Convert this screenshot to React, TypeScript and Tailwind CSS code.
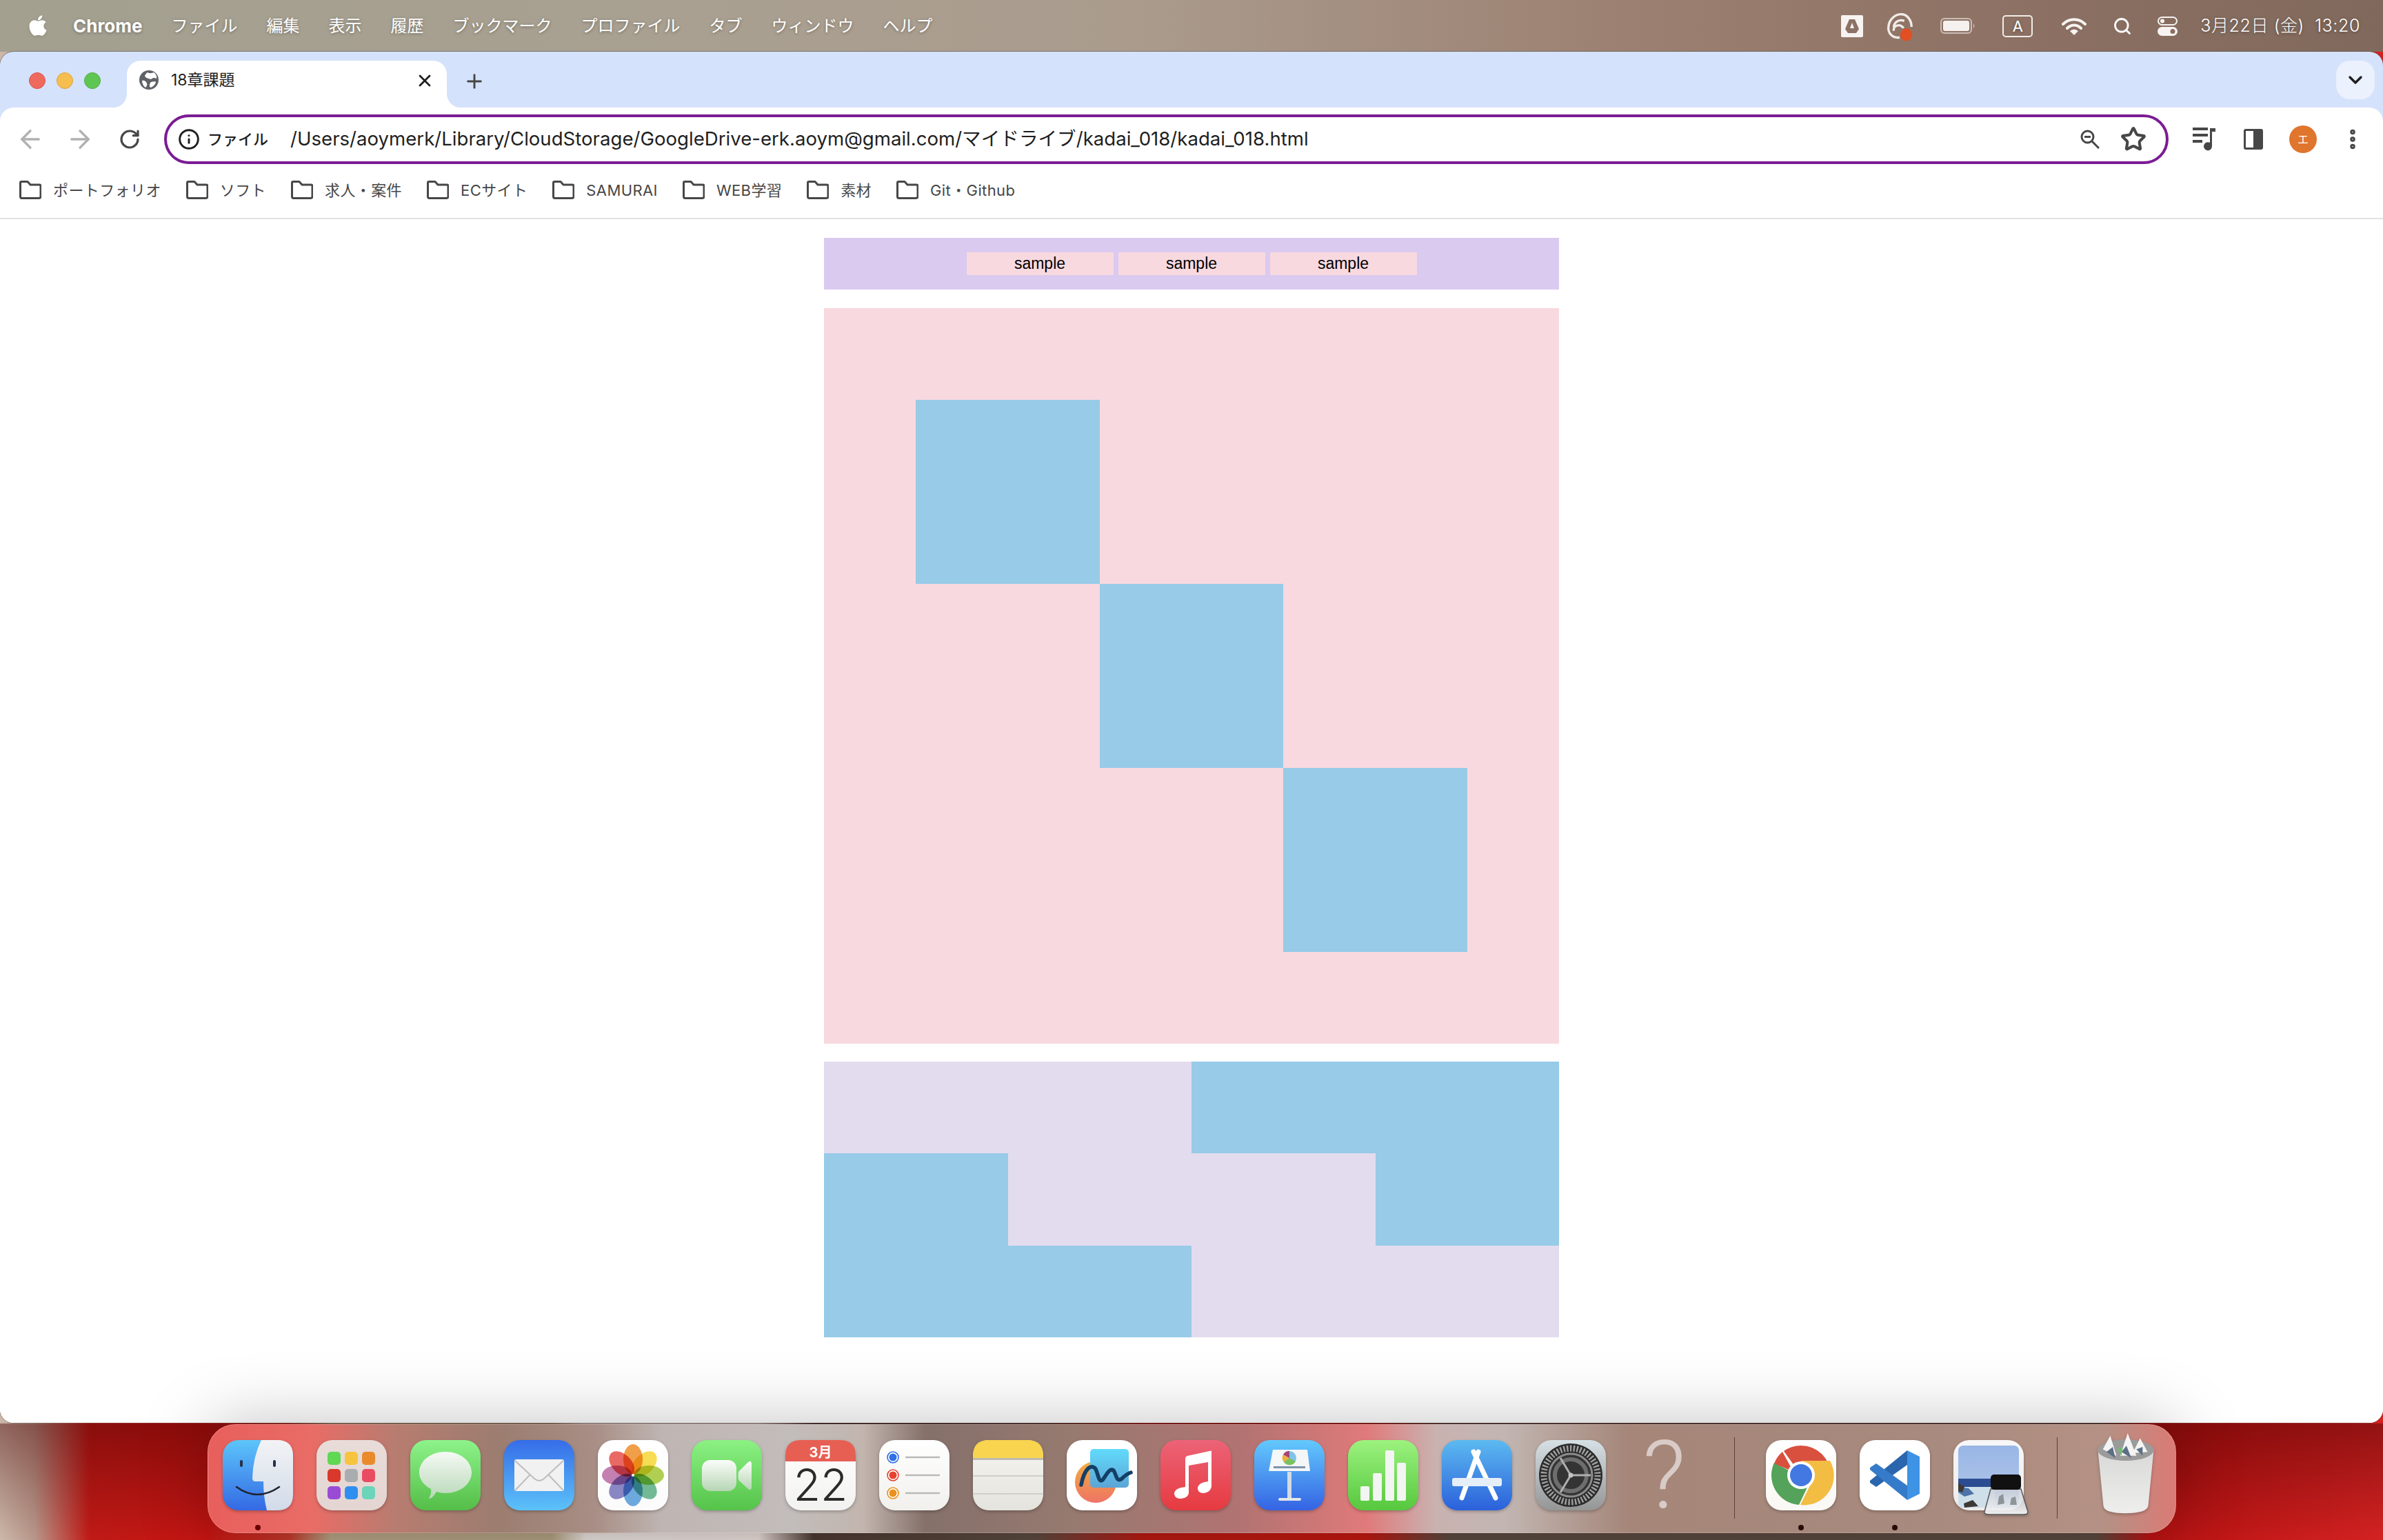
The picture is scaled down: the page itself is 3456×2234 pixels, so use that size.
import { ArrowLeft, ArrowRight, ChevronDown, Info, MoreVertical, Plus, RotateCw, Search, Star, X } from "lucide-react";
import { FaApple } from "react-icons/fa";

const menuItems = ["ファイル", "編集", "表示", "履歴", "ブックマーク", "プロファイル", "タブ", "ウィンドウ", "ヘルプ"];
const bookmarks = ["ポートフォリオ", "ソフト", "求人・案件", "ECサイト", "SAMURAI", "WEB学習", "素材", "Git・Github"];

function Tile({ from, to, children }: { from: string; to: string; children?: React.ReactNode }) {
  const id = `tile-${from.slice(1)}-${to.slice(1)}`;
  return (
    <svg viewBox="0 0 102 102" className="w-[102px] h-[102px] overflow-visible drop-shadow-[0_2px_2px_rgba(0,0,0,0.25)]">
      <defs>
        <linearGradient id={id} x1="0" y1="0" x2="0" y2="1">
          <stop offset="0" stopColor={from} />
          <stop offset="1" stopColor={to} />
        </linearGradient>
      </defs>
      <rect width="102" height="102" rx="23" fill={`url(#${id})`} />
      {children}
    </svg>
  );
}

function Finder() {
  return (
    <Tile from="#5cc5fa" to="#3469e4">
      <defs>
        <linearGradient id="finder-face" x1="0" y1="0" x2="0" y2="1">
          <stop offset="0" stopColor="#f2f3f6" />
          <stop offset="1" stopColor="#d1dbe8" />
        </linearGradient>
      </defs>
      <path d="M56 0H79Q102 0 102 23V79Q102 102 79 102H64Q59 82 59 60H47Q43 60 43 55Q44 24 56 0Z" fill="url(#finder-face)" />
      <rect x="25" y="29" width="4" height="10" rx="2" fill="#25324a" />
      <rect x="73" y="29" width="4" height="10" rx="2" fill="#25324a" />
      <path d="M20 68Q50 90 82 68" fill="none" stroke="#1f2430" strokeWidth="2.6" strokeLinecap="round" />
    </Tile>
  );
}

function Launchpad() {
  const colors = ["#5fd854", "#f7c440", "#e98b2d", "#d8392b", "#a9adb0", "#e94b63", "#9a4bd5", "#2f8ff0", "#6cd4b8"];
  return (
    <Tile from="#e8dcd9" to="#e4d5d2">
      {colors.map((c, i) => (
        <rect key={c} x={16 + (i % 3) * 25} y={17 + Math.floor(i / 3) * 25} width="19" height="19" rx="5" fill={c} />
      ))}
    </Tile>
  );
}

function Messages() {
  return (
    <Tile from="#8df38a" to="#54be48">
      <defs>
        <linearGradient id="msg-bubble" x1="0" y1="0" x2="0" y2="1">
          <stop offset="0" stopColor="#f5faf4" />
          <stop offset="1" stopColor="#b9d8b8" />
        </linearGradient>
      </defs>
      <path d="M51 17C72 17 89 30 89 47C89 64 72 77 51 77C46 77 42 76 38 75C35 80 31 85 27 85C29 81 31 76 30 71C20 66 13 57 13 47C13 30 30 17 51 17Z" fill="url(#msg-bubble)" />
    </Tile>
  );
}

function Mail() {
  return (
    <Tile from="#366de8" to="#5cc2f9">
      <rect x="15" y="28" width="72" height="46" rx="3" fill="#f1f1f1" />
      <path d="M16 30L44 56Q51 62 58 56L86 30M16 73L38 50M86 73L64 50" fill="none" stroke="#bdbdbd" strokeWidth="2" />
    </Tile>
  );
}

function Photos() {
  const petals = ["#f0922e", "#f8d93c", "#a8cb3a", "#5fb28a", "#5a9fdc", "#7b78c0", "#bd6fa8", "#e8544e"];
  return (
    <Tile from="#ffffff" to="#fbfbfb">
      {petals.map((c, i) => (
        <ellipse key={c} cx="51" cy="28" rx="14" ry="22" fill={c} opacity="0.88" className="mix-blend-multiply" transform={`rotate(${i * 45} 51 51)`} />
      ))}
      <circle cx="51" cy="51" r="2" fill="#eee" />
    </Tile>
  );
}

function FaceTime() {
  return (
    <Tile from="#8bf183" to="#55c34a">
      <defs>
        <linearGradient id="ft-body" x1="0" y1="0" x2="0" y2="1">
          <stop offset="0" stopColor="#fbfdfa" />
          <stop offset="1" stopColor="#b6d6b4" />
        </linearGradient>
      </defs>
      <rect x="15" y="29" width="50" height="45" rx="12" fill="url(#ft-body)" />
      <path d="M68 46L82 32Q87 29 87 35V68Q87 74 82 71L68 58Q67 52 68 46Z" fill="url(#ft-body)" />
    </Tile>
  );
}

function Calendar() {
  return (
    <Tile from="#ffffff" to="#f2f2f0">
      <path d="M0 31V23Q0 0 23 0H79Q102 0 102 23V31Z" fill="#e75f53" />
      <text x="51" y="25" textAnchor="middle" fontSize="20" fontWeight="700" fill="#fff">3月</text>
      <text x="51" y="88" textAnchor="middle" fontSize="64" fontWeight="300" fill="#2b2b2b">22</text>
    </Tile>
  );
}

function Reminders() {
  const dots = [
    [25, "#2f6fe8"],
    [51, "#e5432f"],
    [77, "#ea9120"],
  ] as const;
  return (
    <Tile from="#ffffff" to="#f1f0ed">
      {dots.map(([y, c]) => (
        <g key={y}>
          <circle cx="20" cy={y} r="8" fill="#fff" stroke={c} strokeWidth="1.6" />
          <circle cx="20" cy={y} r="5.5" fill={c} />
          <rect x="38" y={y - 1.2} width="50" height="2.4" fill="#b8b8b6" />
        </g>
      ))}
    </Tile>
  );
}

function Notes() {
  return (
    <Tile from="#f6f5f1" to="#e4e3dd">
      <path d="M0 26V23Q0 0 23 0H79Q102 0 102 23V26Z" fill="#f8d44f" />
      <rect y="26" width="102" height="3" fill="#bdbbb2" />
      <rect y="51" width="102" height="2" fill="#cfcec8" />
      <rect y="77" width="102" height="2" fill="#cfcec8" />
    </Tile>
  );
}

function Freeform() {
  return (
    <Tile from="#ffffff" to="#ffffff">
      <defs>
        <linearGradient id="ff-sun" x1="0" y1="0" x2="0" y2="1">
          <stop offset="0" stopColor="#f2ad3f" />
          <stop offset="1" stopColor="#ee7466" />
        </linearGradient>
        <linearGradient id="ff-card" x1="0" y1="0" x2="0" y2="1">
          <stop offset="0" stopColor="#62dafc" />
          <stop offset="1" stopColor="#5ba5d6" />
        </linearGradient>
      </defs>
      <circle cx="42" cy="61" r="30" fill="url(#ff-sun)" />
      <rect x="34" y="13" width="56" height="56" rx="5" fill="url(#ff-card)" />
      <path d="M21 65C26 40 36 34 42 42C46 50 46 62 52 58C58 50 62 40 68 44C72 50 72 62 80 56C86 50 90 48 93 47" fill="none" stroke="#143f66" strokeWidth="5.5" strokeLinecap="round" />
    </Tile>
  );
}

function Music() {
  return (
    <Tile from="#ec6377" to="#e63a40">
      <path d="M74 16V66C74 73 68 77 62 77C56 77 54 73 54 70C54 65 59 62 64 61L69 60V32L41 37V76C41 83 33 85 28 85C23 85 20 81 20 78C20 73 25 70 30 69L36 68V27Q36 24 39 23L71 16Q74 15 74 16Z" fill="#fff" />
    </Tile>
  );
}

function Keynote() {
  return (
    <Tile from="#63c9fd" to="#3463e4">
      <rect x="48" y="46" width="6" height="39" fill="#d4dbe4" />
      <rect x="35" y="84" width="33" height="4" rx="2" fill="#e4e7ea" />
      <path d="M27 14H77L81 45H21Z" fill="#f5f6f7" />
      <rect x="28" y="38" width="46" height="3" fill="#7f93aa" />
      <circle cx="51" cy="26" r="10" fill="#7fc3ea" />
      <path d="M51 26L60 31A10 10 0 0 1 43 32Z" fill="#7cc15f" />
      <path d="M51 26L43 32A10 10 0 0 1 42 21Z" fill="#f0ae3c" />
      <path d="M51 26L42 21A10 10 0 0 1 51 16Z" fill="#a8437a" />
    </Tile>
  );
}

function Numbers() {
  return (
    <Tile from="#9cf27e" to="#56c83e">
      <rect x="18" y="67" width="13" height="21" rx="2" fill="#f2f5f1" />
      <rect x="36" y="48" width="13" height="40" rx="2" fill="#f2f5f1" />
      <rect x="54" y="15" width="13" height="73" rx="2" fill="#f2f5f1" />
      <rect x="71" y="33" width="13" height="55" rx="2" fill="#f2f5f1" />
    </Tile>
  );
}

function AppStore() {
  return (
    <Tile from="#5cbaf0" to="#2b60db">
      <path d="M53 17L29 84M46 17L78 84" stroke="#fff" strokeWidth="7" strokeLinecap="round" />
      <rect x="15" y="55" width="72" height="12" rx="3" fill="#e6eef8" />
    </Tile>
  );
}

function Settings() {
  return (
    <Tile from="#d6e0e5" to="#959595">
      <circle cx="51" cy="51" r="46" fill="#2b2b2b" />
      <circle cx="51" cy="51" r="39" fill="none" stroke="#a0a0a0" strokeWidth="9" strokeDasharray="2.4 2.4" />
      <circle cx="51" cy="51" r="31" fill="#343434" stroke="#8c8c8c" strokeWidth="3" />
      <circle cx="51" cy="51" r="23" fill="none" stroke="#6e6e6e" strokeWidth="6" />
      <path d="M51 51H80M51 51L36 26M51 51L36 76" stroke="#b0b0b0" strokeWidth="3" />
      <circle cx="51" cy="51" r="3.5" fill="#c4c4c4" />
    </Tile>
  );
}

function ChromeApp() {
  return (
    <Tile from="#ffffff" to="#faf8f4">
      <path d="M51 8A43 43 0 0 1 94 51H51L26 16A43 43 0 0 1 51 8Z" fill="#d9503f" />
      <path d="M12 33A43 43 0 0 0 48 94L66 56L33 44Z" fill="#55a25a" />
      <path d="M51 30H93A43 43 0 0 1 50 94L68 58Z" fill="#f3bc43" />
      <path d="M12 34A43 43 0 0 1 24 17L40 46Z" fill="#d9503f" />
      <circle cx="51" cy="51" r="20" fill="#fff" />
      <circle cx="51" cy="51" r="16" fill="#4378e2" />
    </Tile>
  );
}

function VsCode() {
  return (
    <Tile from="#ffffff" to="#ffffff">
      <path d="M69 15L69 36L24 68L15 62V59Z" fill="#2a66ae" />
      <path d="M69 87L69 66L24 34L15 40V43Z" fill="#357bc9" />
      <path d="M69 15L87 24V78L69 87Z" fill="#3f93e4" />
    </Tile>
  );
}

function Preview() {
  return (
    <Tile from="#f7f7f7" to="#ececec">
      <defs>
        <linearGradient id="pv-glass" x1="0" y1="0" x2="0" y2="1">
          <stop offset="0" stopColor="#c9ced4" stopOpacity="0.75" />
          <stop offset="1" stopColor="#f4f5f6" stopOpacity="0.95" />
        </linearGradient>
        <linearGradient id="pv-sky" x1="0" y1="0" x2="0" y2="1">
          <stop offset="0" stopColor="#98b6e6" />
          <stop offset="1" stopColor="#b4c8e8" />
        </linearGradient>
      </defs>
      <path d="M7 16Q7 8 15 8H87Q95 8 95 16V92Q95 98 88 98H15Q7 98 7 90Z" fill="url(#pv-sky)" />
      <rect x="7" y="56" width="88" height="12" fill="#2c4c92" />
      <path d="M7 68H60V98H15Q7 98 7 90Z" fill="#cfdfea" />
      <path d="M7 68L22 70L30 78L16 82L7 76Z" fill="#4d74a8" />
      <path d="M7 62L16 68L13 76L7 74ZM15 92L28 87L36 96L16 98Z" fill="#3d3a36" />
      <path d="M54 71H98L108 104Q108 108 102 108H52Q44 108 45 104Z" fill="url(#pv-glass)" stroke="#55585c" strokeWidth="1.5" />
      <rect x="54" y="50" width="44" height="22" rx="5" fill="#111" />
      <path d="M66 82L72 78L74 92L64 94ZM84 84L90 82L92 94L82 94Z" fill="#8d949a" />
    </Tile>
  );
}

function Trash() {
  return (
    <svg viewBox="0 0 102 130" preserveAspectRatio="none" className="w-[92px] h-[118px] -mt-[10px] overflow-visible drop-shadow-[0_2px_2px_rgba(0,0,0,0.25)]">
      <defs>
        <linearGradient id="trash-cup" x1="0" y1="0" x2="0" y2="1">
          <stop offset="0" stopColor="#d8d8d8" />
          <stop offset="1" stopColor="#eeeeec" />
        </linearGradient>
      </defs>
      <path d="M6 26L15 116Q16 128 50 128Q85 128 87 116L96 26Z" fill="url(#trash-cup)" />
      <ellipse cx="51" cy="27" rx="45" ry="17" fill="#9b9b9b" />
      <path d="M14 26L26 4L36 36ZM42 36L54 0L68 36ZM62 32L74 8L86 30Z" fill="#f4f4f4" />
      <path d="M20 30L30 22L34 40ZM44 30L52 20L60 40ZM68 26L78 22L78 36Z" fill="#5d6f85" />
      <path d="M38 26L46 22L44 36Z" fill="#6bbf6b" />
    </svg>
  );
}

function DockIcon({ children, running, dot = "bg-[#2a0a05]" }: { children: React.ReactNode; running?: boolean; dot?: string }) {
  return (
    <div className="relative w-[102px] h-[102px] flex-none">
      {children}
      {running && <span className={`absolute left-[47px] top-[123px] w-2 h-2 rounded-full ${dot}`} />}
    </div>
  );
}

function Dock() {
  return (
    <div className="relative mx-auto mt-[2px] flex h-[158px] w-[2855px] items-start rounded-[40px] border border-white/20 bg-[linear-gradient(90deg,#e85f5c_0,#e96c66_150px,#b87c70_270px,#9c7d70_420px,#a88e85_560px,#bfb6b3_660px,#c2bcba_850px,#c2b5ae_950px,#85706a_1040px,#967a70_1250px,#b27372_1500px,#e07a7a_1680px,#c9b2b0_1780px,#c2b6b2_1880px,#a58679_2060px,#a88a7e_2500px,#b49184_2750px,#dc7a75_2855px)] pl-[21px] pt-[22px] shadow-[0_0_100px_rgba(0,0,0,0.25)]">
      <div className="flex gap-[34px]">
        <DockIcon running dot="bg-[#6b0000]"><Finder /></DockIcon>
        <DockIcon><Launchpad /></DockIcon>
        <DockIcon><Messages /></DockIcon>
        <DockIcon><Mail /></DockIcon>
        <DockIcon><Photos /></DockIcon>
        <DockIcon><FaceTime /></DockIcon>
        <DockIcon><Calendar /></DockIcon>
        <DockIcon><Reminders /></DockIcon>
        <DockIcon><Notes /></DockIcon>
        <DockIcon><Freeform /></DockIcon>
        <DockIcon><Music /></DockIcon>
        <DockIcon><Keynote /></DockIcon>
        <DockIcon><Numbers /></DockIcon>
        <DockIcon><AppStore /></DockIcon>
        <DockIcon><Settings /></DockIcon>
        <div className="flex h-[102px] w-[102px] flex-none items-center justify-center font-['Roboto',sans-serif] text-[137px] font-light leading-none text-[#d9cbc7]">?</div>
      </div>
      <div className="ml-[50px] -mt-[4px] h-[118px] w-px bg-[#5c4038]" />
      <div className="ml-[45px] flex gap-[34px]">
        <DockIcon running><ChromeApp /></DockIcon>
        <DockIcon running><VsCode /></DockIcon>
        <DockIcon><Preview /></DockIcon>
      </div>
      <div className="ml-[48px] -mt-[4px] h-[118px] w-px bg-[#5c4038]" />
      <div className="ml-[53px]"><Trash /></div>
    </div>
  );
}

function MenuBar() {
  return (
    <div className="flex h-[75px] flex-none items-center bg-[linear-gradient(90deg,#a3a090_0,#a9a091_1000px,#aa9b8d_1650px,#9b7f70_2400px,#8a6f62_3000px,#80695c_3456px)] pl-[41px] text-[24px] text-white [text-shadow:0_1px_4px_rgba(0,0,0,0.35)]">
      <FaApple className="h-[34px] w-[28px] -mt-[2px] drop-shadow" />
      <span className="ml-[37px] text-[26px] font-bold">Chrome</span>
      <div className="ml-[42px] flex gap-[42px]">
        {menuItems.map((item) => (
          <span key={item}>{item}</span>
        ))}
      </div>
      <div className="ml-auto flex items-center pr-[33px]">
        <svg viewBox="0 0 32 32" className="h-8 w-8">
          <path d="M2 0H30Q32 0 32 2V30Q32 32 30 32H2Q0 32 0 30V2Q0 0 2 0Z" fill="#f7f3f0" />
          <path d="M12 6H20L26 20L22 26H10L6 20Z" fill="#8d7165" />
          <path d="M16 11L19 19H13Z" fill="#f7f3f0" />
        </svg>
        <svg viewBox="0 0 41 46" className="ml-[33px] h-[44px] w-[41px]">
          <path d="M20 40C8 42 2 32 3 24C4 12 14 4 24 5C32 6 38 14 38 24M11 24C12 16 20 12 27 15M11 30C10 22 20 18 26 26" fill="none" stroke="#f3ece8" strokeWidth="3.5" />
          <ellipse cx="30" cy="36" rx="9" ry="9.5" fill="#e24f22" />
        </svg>
        <svg viewBox="0 0 51 23" className="ml-[38px] h-[23px] w-[51px]">
          <rect x="1" y="1" width="44" height="21" rx="5" fill="none" stroke="#cbbdb6" strokeWidth="2" />
          <rect x="4" y="4" width="38" height="15" rx="3" fill="#f5f1ee" />
          <path d="M48 8Q51 11.5 48 15Z" fill="#cbbdb6" />
        </svg>
        <div className="ml-[39px] flex h-8 w-[44px] items-center justify-center rounded-[5px] border-2 border-[#f3ece8] text-[22px] leading-none">A</div>
        <svg viewBox="0 0 36 26" className="ml-[42px] h-[26px] w-[36px]">
          <path d="M2 10C11 1 25 1 34 10M8 16C14 10 22 10 28 16" fill="none" stroke="#f7f3f0" strokeWidth="4" strokeLinecap="round" />
          <path d="M18 26L12 20Q18 15 24 20Z" fill="#f7f3f0" />
        </svg>
        <Search className="ml-[38px] h-[28px] w-[28px]" strokeWidth={2.4} />
        <svg viewBox="0 0 29 28" className="ml-[37px] h-[28px] w-[29px]">
          <rect x="1" y="1" width="27" height="11" rx="5.5" fill="none" stroke="#f7f3f0" strokeWidth="2" />
          <circle cx="7" cy="6.5" r="3" fill="#f7f3f0" />
          <rect y="15" width="29" height="13" rx="6.5" fill="#f7f3f0" />
          <circle cx="22" cy="21.5" r="3.5" fill="#8a6f62" />
        </svg>
        <span className="ml-[33px] text-[25px] font-light tracking-[0.6px]">3月22日 (金)&nbsp; 13:20</span>
      </div>
    </div>
  );
}

function FolderIcon() {
  return (
    <svg viewBox="0 0 32 27" className="h-[27px] w-[32px] flex-none">
      <path d="M3 1.5H12L16 6H29Q31 6 31 8V23Q31 25.5 28.5 25.5H3.5Q1.5 25.5 1.5 23V3Q1.5 1.5 3 1.5Z" fill="none" stroke="#474747" strokeWidth="3" strokeLinejoin="round" />
    </svg>
  );
}

function ToolSlot({ children }: { children: React.ReactNode }) {
  return <div className="flex h-[72px] w-[72px] flex-none items-center justify-center">{children}</div>;
}

function TabStrip() {
  return (
    <div className="flex h-[81px] flex-none items-end">
      <div className="ml-[42px] mb-[27px] flex gap-4">
        <span className="h-6 w-6 rounded-full border border-[#d9534a] bg-[#ee6a5f]" />
        <span className="h-6 w-6 rounded-full border border-[#dba63c] bg-[#f6bd4f]" />
        <span className="h-6 w-6 rounded-full border border-[#4fae45] bg-[#5fc653]" />
      </div>
      <div className="relative ml-[38px] flex h-[68px] w-[464px] items-start rounded-t-[20px] bg-white pl-[18px] pt-[14px]">
        <span className="absolute -left-5 bottom-0 h-5 w-5 bg-white">
          <span className="block h-5 w-5 rounded-br-[20px] bg-[#d5e2fb]" />
        </span>
        <span className="absolute -right-5 bottom-0 h-5 w-5 bg-white">
          <span className="block h-5 w-5 rounded-bl-[20px] bg-[#d5e2fb]" />
        </span>
        <svg viewBox="0 0 28 28" className="h-7 w-7 flex-none">
          <circle cx="14" cy="14" r="14" fill="#5f6368" />
          <path d="M12 3C15 5 19 4 21 3C24 5 26 9 25 12C21 10 19 11 17 13C13 12 9 11 8 8C9 6 10 4 12 3ZM4 15C7 14 10 16 11 19C12 22 10 24 9 25C6 23 4 19 4 15ZM17 17C20 16 24 16 24 17C23 21 20 24 16 25C14 22 15 19 17 17Z" fill="#fff" />
        </svg>
        <span className="ml-[18px] text-[23px] leading-[28px] text-[#1f1f1f]">18章課題</span>
        <X className="absolute left-[418px] top-[15px] h-[28px] w-[28px] text-[#1f1f1f]" strokeWidth={2.4} />
      </div>
      <Plus className="ml-[24px] mb-[22px] h-[32px] w-[32px] text-[#474747]" strokeWidth={2.2} />
      <div className="ml-auto mr-3 mb-3 flex h-14 w-14 items-center justify-center rounded-[20px] bg-[#ebf1fd]">
        <ChevronDown className="h-8 w-8 text-[#1f1f1f]" strokeWidth={2.6} />
      </div>
    </div>
  );
}

function Toolbar() {
  return (
    <div className="flex h-[92px] flex-none items-center pl-2">
      <ToolSlot><ArrowLeft className="h-[42px] w-[42px] text-[#b1b1b1]" strokeWidth={1.9} /></ToolSlot>
      <ToolSlot><ArrowRight className="h-[42px] w-[42px] text-[#b1b1b1]" strokeWidth={1.9} /></ToolSlot>
      <ToolSlot><RotateCw className="h-[32px] w-[32px] text-[#474747]" strokeWidth={2.4} /></ToolSlot>
      <div className="ml-[14px] flex h-[72px] w-[2907px] flex-none items-center rounded-full border-4 border-[#7b1c94] pl-[16px] pr-[28px]">
        <Info className="h-[32px] w-[32px] flex-none text-[#1f1f1f]" strokeWidth={2.2} />
        <span className="ml-[11px] text-[22px] font-medium text-[#1f1f1f]">ファイル</span>
        <span className="ml-[32px] text-[27.6px] text-[#1f1f1f]">/Users/aoymerk/Library/CloudStorage/GoogleDrive-erk.aoym@gmail.com/マイドライブ/kadai_018/kadai_018.html</span>
        <svg viewBox="0 0 28 28" className="ml-auto h-7 w-7 flex-none">
          <circle cx="10.5" cy="10.5" r="8.5" fill="none" stroke="#474747" strokeWidth="3" />
          <path d="M6 10.5H15M16.5 16.5L27 27" fill="none" stroke="#474747" strokeWidth="3" />
        </svg>
        <Star className="ml-[30px] h-[38px] w-[38px] text-[#474747]" strokeWidth={2.6} />
      </div>
      <div className="ml-[15px] flex">
        <ToolSlot>
          <svg viewBox="0 0 33 36" className="h-9 w-[33px]">
            <path d="M0 3H22M0 12H22M0 21H14" stroke="#474747" strokeWidth="4" />
            <path d="M25 2H33V7H28V28A6 6 0 1 1 25 23Z" fill="#474747" />
          </svg>
        </ToolSlot>
        <ToolSlot>
          <div className="flex h-[30px] w-[28px] justify-end rounded-[3px] border-[3px] border-[#474747]">
            <span className="h-full w-[11px] bg-[#474747]" />
          </div>
        </ToolSlot>
        <ToolSlot>
          <div className="flex h-10 w-10 items-center justify-center rounded-full bg-[#e0752d] text-[16px] text-white">エ</div>
        </ToolSlot>
        <ToolSlot><MoreVertical className="h-9 w-9 text-[#474747]" strokeWidth={3} /></ToolSlot>
      </div>
    </div>
  );
}

function BookmarkBar() {
  return (
    <div className="flex h-[70px] flex-none items-start gap-[36px] border-b-2 border-[#e3e3e3] pl-[28px] pt-[14px]">
      {bookmarks.map((name) => (
        <div key={name} className="flex h-[27px] items-center gap-[17px]">
          <FolderIcon />
          <span className="text-[22px] leading-none tracking-[0.4px] text-[#474747]">{name}</span>
        </div>
      ))}
    </div>
  );
}

function Page() {
  return (
    <div className="flex-1 bg-white pt-[27px] font-['Liberation_Sans',sans-serif]">
      <div className="mx-auto w-[1066px]">
        <header className="flex h-[75px] items-center justify-center gap-[7px] bg-[#dacaef]">
          {[0, 1, 2].map((i) => (
            <div key={i} className="flex h-[33px] w-[213px] items-center justify-center bg-[#f8d9df] text-[23px] text-black">sample</div>
          ))}
        </header>
        <main className="mt-[27px] grid h-[1067px] grid-cols-3 grid-rows-3 bg-[#f8d9df] p-[133px]">
          <div className="col-start-1 row-start-1 bg-[#97cbe8]" />
          <div className="col-start-2 row-start-2 bg-[#97cbe8]" />
          <div className="col-start-3 row-start-3 bg-[#97cbe8]" />
        </main>
        <section className="mt-[26px] grid h-[400px] grid-cols-4 grid-rows-3 bg-[#e3dcee]">
          <div className="col-span-2 col-start-3 row-start-1 bg-[#97cbe8]" />
          <div className="col-start-1 row-start-2 bg-[#97cbe8]" />
          <div className="col-start-4 row-start-2 bg-[#97cbe8]" />
          <div className="col-span-2 col-start-1 row-start-3 bg-[#97cbe8]" />
        </section>
      </div>
    </div>
  );
}

export default function App() {
  return (
    <div className="flex h-[2234px] w-[3456px] flex-col overflow-hidden bg-[linear-gradient(180deg,transparent_2064px,rgba(70,0,0,0.45)_2066px,transparent_2234px),linear-gradient(90deg,#cdb8aa_0,#b8978a_50px,#c01a16_130px,#c41512_300px,#c23a2c_420px,#b4a384_480px,#b0a080_800px,#e6e0dc_850px,#e8dcd8_1100px,#4c3a32_1180px,#5b4a40_1500px,#b81a12_1660px,#c01810_1980px,#5b4a40_2100px,#5b4a40_3040px,#b81212_3120px,#d42222_3456px)] font-['Inter','Noto_Sans_CJK_JP',sans-serif]">
      <MenuBar />
      <div className="flex h-[1989px] flex-none flex-col overflow-hidden rounded-[20px] bg-[#d5e2fb] shadow-[0_0_0_1px_rgba(70,70,70,0.45)]">
        <TabStrip />
        <div className="flex flex-1 flex-col overflow-hidden rounded-t-[20px] bg-white">
          <Toolbar />
          <BookmarkBar />
          <Page />
        </div>
      </div>
      <Dock />
    </div>
  );
}
